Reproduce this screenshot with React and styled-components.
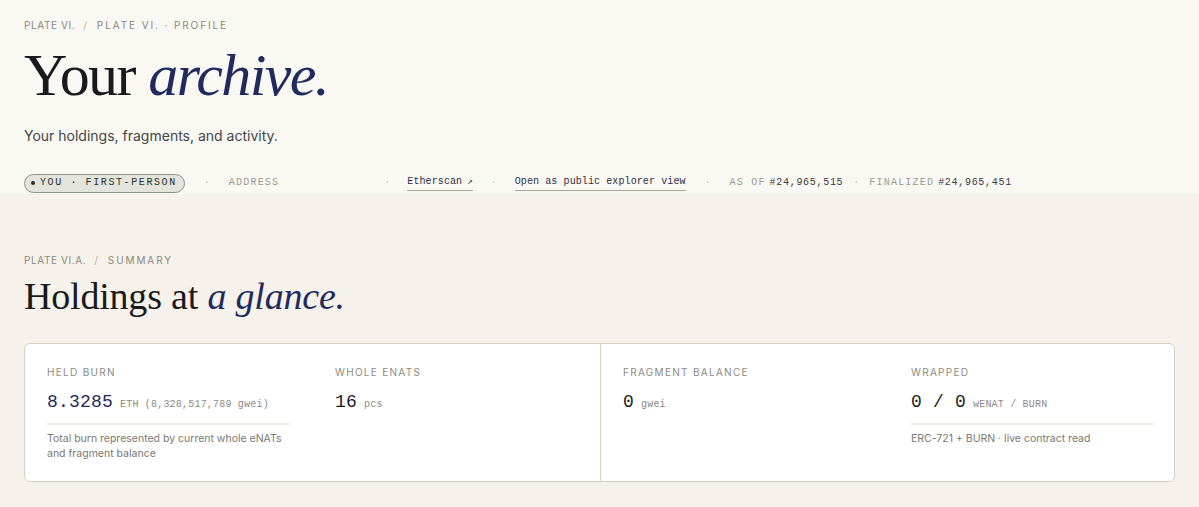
import styled, { createGlobalStyle } from "styled-components";

const GlobalStyle = createGlobalStyle`
  html, body {
    margin: 0;
    padding: 0;
    background: #f6f2eb;
  }
  body {
    font-family: Inter, "Noto Sans", sans-serif;
    color: #1c1c1e;
  }
`;

const serif = `"Liberation Serif", "DejaVu Serif", serif`;
const mono = `"Liberation Mono", "DejaVu Sans Mono", monospace`;

const Page = styled.div`
  min-height: 507px;
`;

const Header = styled.header`
  background: #faf8f3;
  padding: 19px 24px 1px;
`;

const Crumb = styled.div`
  display: flex;
  align-items: center;
  font-size: 10px;
  line-height: 12px;
  color: #8b877e;
  text-transform: uppercase;
`;

const CrumbPart = styled.span`
  letter-spacing: ${(p) => (p.$wide ? "1.9px" : "0.6px")};
`;

const Slash = styled.span`
  margin: 0 10px 0 8px;
  color: #b1aca2;
`;

const Title = styled.h1`
  font-family: ${serif};
  font-weight: 400;
  font-size: ${(p) => p.$size}px;
  letter-spacing: ${(p) => p.$tracking}px;
  line-height: 1;
  margin: ${(p) => p.$margin};
  color: #1a1a1d;

  em {
    color: #1f2a5e;
  }
`;

const Lede = styled.p`
  margin: 21px 0 0;
  font-size: 14px;
  color: #45454a;
  line-height: 20px;
`;

const MetaRow = styled.div`
  display: flex;
  align-items: center;
  margin-top: 27px;
  font-family: ${mono};
  font-size: 10px;
  line-height: 14px;
  height: 20px;
`;

const Pill = styled.span`
  display: inline-flex;
  align-items: center;
  gap: 5px;
  height: 17px;
  padding: 0 7px 0 6px;
  border: 1px solid #8f938a;
  border-radius: 999px;
  background: #e3e5dd;
  color: #27302b;
  letter-spacing: 1.6px;
`;

const Bullet = styled.i`
  width: 4px;
  height: 4px;
  border-radius: 50%;
  background: #27302b;
`;

const Dot = styled.span`
  color: #bdb8ae;
  margin: 0 ${(p) => p.$gap}px;
`;

const MetaLabel = styled.span`
  color: #9e9a92;
  letter-spacing: 1.2px;
`;

const AddressSlot = styled.span`
  display: inline-block;
  width: 88px;
`;

const MetaLink = styled.a`
  color: #2a2e44;
  text-decoration: none;
  border-bottom: 1px solid #aaa597;
  padding-bottom: 1px;
  letter-spacing: 0.1px;
`;

const Arrow = styled.span`
  font-size: 9px;
  margin-left: 5px;
`;

const Block = styled.span`
  color: #3b3b40;
  letter-spacing: 0.7px;
  margin-left: 4px;
`;

const Section = styled.section`
  padding: 60px 24px 0;
`;

const Card = styled.div`
  display: grid;
  grid-template-columns: 1fr 1fr;
  background: #fff;
  border: 1px solid #d5cfc3;
  border-radius: 6px;
  margin-top: 28px;
  min-height: 137px;
`;

const Half = styled.div`
  display: grid;
  grid-template-columns: 243px 243px;
  column-gap: 45px;
  padding: 21px 22px 20px;
  border-left: ${(p) => (p.$divided ? "1px solid #d5cfc3" : "none")};
`;

const Stat = styled.div`
  display: flex;
  flex-direction: column;
`;

const Label = styled.div`
  font-size: 10px;
  line-height: 14px;
  letter-spacing: 1.3px;
  text-transform: uppercase;
  color: #8d8a84;
`;

const Value = styled.div`
  display: flex;
  align-items: baseline;
  margin-top: 12px;
  padding-bottom: 10px;
  border-bottom: ${(p) => (p.$ruled ? "2px solid #eeebe5" : "2px solid transparent")};
`;

const Figure = styled.span`
  font-family: ${mono};
  font-size: 18px;
  line-height: 22px;
  color: ${(p) => (p.$accent ? "#1f2a5e" : "#1c1c1e")};
  letter-spacing: 0.2px;
`;

const Unit = styled.span`
  font-family: ${mono};
  font-size: 10px;
  color: #8d8a84;
  margin-left: 7px;
  letter-spacing: 0.2px;
`;

const Note = styled.p`
  margin: 6px 0 0;
  font-size: 10.5px;
  line-height: 15px;
  color: #7b7872;
`;

const StatBlock = ({ label, figure, unit, accent, note }) => (
  <Stat>
    <Label>{label}</Label>
    <Value $ruled={!!note}>
      <Figure $accent={accent}>{figure}</Figure>
      <Unit>{unit}</Unit>
    </Value>
    {note && <Note>{note}</Note>}
  </Stat>
);

export default function App() {
  return (
    <Page>
      <GlobalStyle />
      <Header>
        <Crumb>
          <CrumbPart>Plate VI.</CrumbPart>
          <Slash>/</Slash>
          <CrumbPart $wide>Plate VI. · Profile</CrumbPart>
        </Crumb>
        <Title $size={60} $tracking={-1.6} $margin="14px 0 0">
          Your <em>archive.</em>
        </Title>
        <Lede>Your holdings, fragments, and activity.</Lede>
        <MetaRow>
          <Pill>
            <Bullet />
            YOU · FIRST-PERSON
          </Pill>
          <Dot $gap={19}>·</Dot>
          <MetaLabel>ADDRESS</MetaLabel>
          <AddressSlot />
          <Dot $gap={17}>·</Dot>
          <MetaLink href="#">
            Etherscan<Arrow>↗</Arrow>
          </MetaLink>
          <Dot $gap={18}>·</Dot>
          <MetaLink href="#">Open as public explorer view</MetaLink>
          <Dot $gap={19}>·</Dot>
          <MetaLabel>AS OF</MetaLabel>
          <Block>#24,965,515</Block>
          <Dot $gap={10}>·</Dot>
          <MetaLabel>FINALIZED</MetaLabel>
          <Block>#24,965,451</Block>
        </MetaRow>
      </Header>

      <Section>
        <Crumb>
          <CrumbPart>Plate VI.A.</CrumbPart>
          <Slash>/</Slash>
          <CrumbPart $wide>Summary</CrumbPart>
        </Crumb>
        <Title $size={38} $tracking={-0.2} $margin="11px 0 0">
          Holdings at <em>a glance.</em>
        </Title>
        <Card>
          <Half>
            <StatBlock
              label="Held burn"
              figure="8.3285"
              unit="ETH (8,328,517,789 gwei)"
              accent
              note="Total burn represented by current whole eNATs and fragment balance"
            />
            <StatBlock label="Whole eNATs" figure="16" unit="pcs" />
          </Half>
          <Half $divided>
            <StatBlock label="Fragment balance" figure="0" unit="gwei" />
            <StatBlock
              label="Wrapped"
              figure="0 / 0"
              unit="wENAT / BURN"
              note="ERC-721 + BURN · live contract read"
            />
          </Half>
        </Card>
      </Section>
    </Page>
  );
}
